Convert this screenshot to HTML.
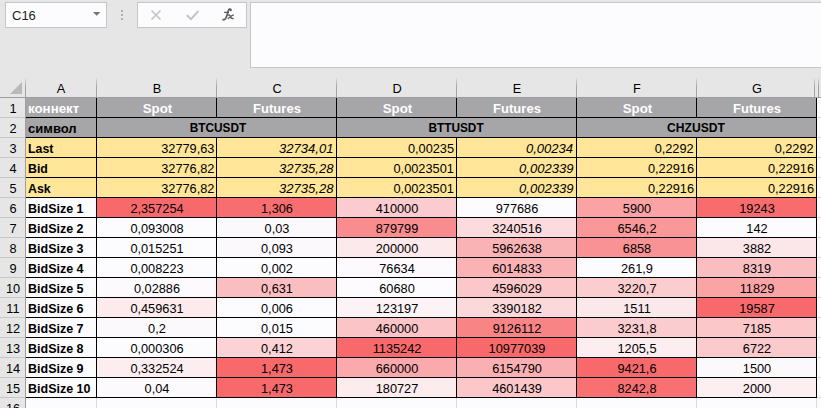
<!DOCTYPE html><html><head><meta charset="utf-8"><style>
*{margin:0;padding:0;box-sizing:border-box}
html,body{width:821px;height:408px;overflow:hidden;background:#e6e6e6;font-family:"Liberation Sans",sans-serif}
.a{position:absolute}
.t{position:absolute;white-space:nowrap;font-size:13.3px;line-height:19px;color:#000}
.b{font-weight:bold}
.i{font-style:italic}
</style></head><body><div class="a" style="left:26px;top:98px;width:795px;height:310px;background:#fcfcfe"></div>
<div class="a" style="left:26px;top:98px;width:791px;height:19px;background:#a6a5a8"></div>
<div class="a" style="left:26px;top:117px;width:791px;height:20px;background:#a6a5a8"></div>
<div class="a" style="left:26px;top:137px;width:791px;height:20px;background:#ffe699"></div>
<div class="a" style="left:26px;top:157px;width:791px;height:20px;background:#ffe699"></div>
<div class="a" style="left:26px;top:177px;width:791px;height:20px;background:#ffe699"></div>
<div class="a" style="left:97px;top:197px;width:120px;height:20px;background:#f8696b"></div>
<div class="a" style="left:97px;top:217px;width:120px;height:20px;background:#fcfbfe"></div>
<div class="a" style="left:97px;top:237px;width:120px;height:20px;background:#fcfbfe"></div>
<div class="a" style="left:97px;top:257px;width:120px;height:20px;background:#fcfcff"></div>
<div class="a" style="left:97px;top:277px;width:120px;height:20px;background:#fcfafd"></div>
<div class="a" style="left:97px;top:297px;width:120px;height:20px;background:#fceaed"></div>
<div class="a" style="left:97px;top:317px;width:120px;height:20px;background:#fcf9fc"></div>
<div class="a" style="left:97px;top:337px;width:120px;height:20px;background:#fcfcff"></div>
<div class="a" style="left:97px;top:357px;width:120px;height:20px;background:#fcedf0"></div>
<div class="a" style="left:97px;top:377px;width:120px;height:20px;background:#fcfafd"></div>
<div class="a" style="left:217px;top:197px;width:120px;height:20px;background:#f86d6f"></div>
<div class="a" style="left:217px;top:217px;width:120px;height:20px;background:#fcf9fc"></div>
<div class="a" style="left:217px;top:237px;width:120px;height:20px;background:#fcf9fc"></div>
<div class="a" style="left:217px;top:257px;width:120px;height:20px;background:#fcfcff"></div>
<div class="a" style="left:217px;top:277px;width:120px;height:20px;background:#fabdc0"></div>
<div class="a" style="left:217px;top:297px;width:120px;height:20px;background:#fcfcff"></div>
<div class="a" style="left:217px;top:317px;width:120px;height:20px;background:#fcfbfe"></div>
<div class="a" style="left:217px;top:337px;width:120px;height:20px;background:#fbd3d6"></div>
<div class="a" style="left:217px;top:357px;width:120px;height:20px;background:#f8696b"></div>
<div class="a" style="left:217px;top:377px;width:120px;height:20px;background:#f8696b"></div>
<div class="a" style="left:337px;top:197px;width:120px;height:20px;background:#fbcccf"></div>
<div class="a" style="left:337px;top:217px;width:120px;height:20px;background:#f98c8e"></div>
<div class="a" style="left:337px;top:237px;width:120px;height:20px;background:#fbe9ec"></div>
<div class="a" style="left:337px;top:257px;width:120px;height:20px;background:#fcfafd"></div>
<div class="a" style="left:337px;top:277px;width:120px;height:20px;background:#fcfcff"></div>
<div class="a" style="left:337px;top:297px;width:120px;height:20px;background:#fcf3f6"></div>
<div class="a" style="left:337px;top:317px;width:120px;height:20px;background:#fbc5c8"></div>
<div class="a" style="left:337px;top:337px;width:120px;height:20px;background:#f8696b"></div>
<div class="a" style="left:337px;top:357px;width:120px;height:20px;background:#faaaac"></div>
<div class="a" style="left:337px;top:377px;width:120px;height:20px;background:#fcecee"></div>
<div class="a" style="left:457px;top:197px;width:120px;height:20px;background:#fcfcff"></div>
<div class="a" style="left:457px;top:217px;width:120px;height:20px;background:#fbdbde"></div>
<div class="a" style="left:457px;top:237px;width:120px;height:20px;background:#fab3b5"></div>
<div class="a" style="left:457px;top:257px;width:120px;height:20px;background:#fab2b4"></div>
<div class="a" style="left:457px;top:277px;width:120px;height:20px;background:#fbc7c9"></div>
<div class="a" style="left:457px;top:297px;width:120px;height:20px;background:#fbd9db"></div>
<div class="a" style="left:457px;top:317px;width:120px;height:20px;background:#f98486"></div>
<div class="a" style="left:457px;top:337px;width:120px;height:20px;background:#f8696b"></div>
<div class="a" style="left:457px;top:357px;width:120px;height:20px;background:#fab0b2"></div>
<div class="a" style="left:457px;top:377px;width:120px;height:20px;background:#fbc7c9"></div>
<div class="a" style="left:577px;top:197px;width:120px;height:20px;background:#faa2a4"></div>
<div class="a" style="left:577px;top:217px;width:120px;height:20px;background:#f99799"></div>
<div class="a" style="left:577px;top:237px;width:120px;height:20px;background:#f99294"></div>
<div class="a" style="left:577px;top:257px;width:120px;height:20px;background:#fcfcff"></div>
<div class="a" style="left:577px;top:277px;width:120px;height:20px;background:#fbcdcf"></div>
<div class="a" style="left:577px;top:297px;width:120px;height:20px;background:#fbe8eb"></div>
<div class="a" style="left:577px;top:317px;width:120px;height:20px;background:#fbcccf"></div>
<div class="a" style="left:577px;top:337px;width:120px;height:20px;background:#fcedf0"></div>
<div class="a" style="left:577px;top:357px;width:120px;height:20px;background:#f8696b"></div>
<div class="a" style="left:577px;top:377px;width:120px;height:20px;background:#f87072"></div>
<div class="a" style="left:697px;top:197px;width:120px;height:20px;background:#f86c6e"></div>
<div class="a" style="left:697px;top:217px;width:120px;height:20px;background:#fcfcff"></div>
<div class="a" style="left:697px;top:237px;width:120px;height:20px;background:#fbe7ea"></div>
<div class="a" style="left:697px;top:257px;width:120px;height:20px;background:#fabec1"></div>
<div class="a" style="left:697px;top:277px;width:120px;height:20px;background:#faa4a6"></div>
<div class="a" style="left:697px;top:297px;width:120px;height:20px;background:#f8696b"></div>
<div class="a" style="left:697px;top:317px;width:120px;height:20px;background:#fbc7c9"></div>
<div class="a" style="left:697px;top:337px;width:120px;height:20px;background:#fbcacd"></div>
<div class="a" style="left:697px;top:357px;width:120px;height:20px;background:#fcf9fc"></div>
<div class="a" style="left:697px;top:377px;width:120px;height:20px;background:#fceef1"></div>
<div class="a" style="left:817px;top:117px;width:4px;height:1px;background:#dadada"></div>
<div class="a" style="left:817px;top:137px;width:4px;height:1px;background:#dadada"></div>
<div class="a" style="left:817px;top:157px;width:4px;height:1px;background:#dadada"></div>
<div class="a" style="left:817px;top:177px;width:4px;height:1px;background:#dadada"></div>
<div class="a" style="left:817px;top:197px;width:4px;height:1px;background:#dadada"></div>
<div class="a" style="left:817px;top:217px;width:4px;height:1px;background:#dadada"></div>
<div class="a" style="left:817px;top:237px;width:4px;height:1px;background:#dadada"></div>
<div class="a" style="left:817px;top:257px;width:4px;height:1px;background:#dadada"></div>
<div class="a" style="left:817px;top:277px;width:4px;height:1px;background:#dadada"></div>
<div class="a" style="left:817px;top:297px;width:4px;height:1px;background:#dadada"></div>
<div class="a" style="left:817px;top:317px;width:4px;height:1px;background:#dadada"></div>
<div class="a" style="left:817px;top:337px;width:4px;height:1px;background:#dadada"></div>
<div class="a" style="left:817px;top:357px;width:4px;height:1px;background:#dadada"></div>
<div class="a" style="left:817px;top:377px;width:4px;height:1px;background:#dadada"></div>
<div class="a" style="left:817px;top:397px;width:4px;height:1px;background:#dadada"></div>
<div class="a" style="left:96px;top:398px;width:1px;height:10px;background:#dadada"></div>
<div class="a" style="left:216px;top:398px;width:1px;height:10px;background:#dadada"></div>
<div class="a" style="left:336px;top:398px;width:1px;height:10px;background:#dadada"></div>
<div class="a" style="left:456px;top:398px;width:1px;height:10px;background:#dadada"></div>
<div class="a" style="left:576px;top:398px;width:1px;height:10px;background:#dadada"></div>
<div class="a" style="left:696px;top:398px;width:1px;height:10px;background:#dadada"></div>
<div class="a" style="left:816px;top:398px;width:1px;height:10px;background:#dadada"></div>
<div class="a" style="left:26px;top:117px;width:791px;height:1px;background:#000"></div>
<div class="a" style="left:26px;top:137px;width:791px;height:1px;background:#000"></div>
<div class="a" style="left:26px;top:157px;width:791px;height:1px;background:#000"></div>
<div class="a" style="left:26px;top:177px;width:791px;height:1px;background:#000"></div>
<div class="a" style="left:26px;top:197px;width:791px;height:1px;background:#000"></div>
<div class="a" style="left:26px;top:217px;width:791px;height:1px;background:#000"></div>
<div class="a" style="left:26px;top:237px;width:791px;height:1px;background:#000"></div>
<div class="a" style="left:26px;top:257px;width:791px;height:1px;background:#000"></div>
<div class="a" style="left:26px;top:277px;width:791px;height:1px;background:#000"></div>
<div class="a" style="left:26px;top:297px;width:791px;height:1px;background:#000"></div>
<div class="a" style="left:26px;top:317px;width:791px;height:1px;background:#000"></div>
<div class="a" style="left:26px;top:337px;width:791px;height:1px;background:#000"></div>
<div class="a" style="left:26px;top:357px;width:791px;height:1px;background:#000"></div>
<div class="a" style="left:26px;top:377px;width:791px;height:1px;background:#000"></div>
<div class="a" style="left:26px;top:397px;width:791px;height:1px;background:#000"></div>
<div class="a" style="left:96px;top:98px;width:1px;height:300px;background:#000"></div>
<div class="a" style="left:216px;top:98px;width:1px;height:300px;background:#000"></div>
<div class="a" style="left:336px;top:98px;width:1px;height:300px;background:#000"></div>
<div class="a" style="left:456px;top:98px;width:1px;height:300px;background:#000"></div>
<div class="a" style="left:576px;top:98px;width:1px;height:300px;background:#000"></div>
<div class="a" style="left:696px;top:98px;width:1px;height:300px;background:#000"></div>
<div class="a" style="left:816px;top:98px;width:1px;height:300px;background:#000"></div>
<div class="a" style="left:216px;top:118px;width:1px;height:19px;background:#a6a5a8"></div>
<div class="a" style="left:456px;top:118px;width:1px;height:19px;background:#a6a5a8"></div>
<div class="a" style="left:696px;top:118px;width:1px;height:19px;background:#a6a5a8"></div>
<div class="a" style="left:0;top:97px;width:25px;height:311px;background:#e6e6e6"></div>
<div class="a" style="left:25px;top:78px;width:1px;height:19px;background:linear-gradient(#dcdcdc,#a8a8a8 40%,#a0a0a0)"></div>
<div class="a" style="left:25px;top:97px;width:1px;height:311px;background:#9e9e9e"></div>
<div class="a" style="left:0;top:97px;width:821px;height:1px;background:#9e9e9e"></div>
<div class="a" style="left:0;top:117px;width:25px;height:1px;background:#c6c6c6"></div>
<div class="a" style="left:0;top:137px;width:25px;height:1px;background:#c6c6c6"></div>
<div class="a" style="left:0;top:157px;width:25px;height:1px;background:#c6c6c6"></div>
<div class="a" style="left:0;top:177px;width:25px;height:1px;background:#c6c6c6"></div>
<div class="a" style="left:0;top:197px;width:25px;height:1px;background:#c6c6c6"></div>
<div class="a" style="left:0;top:217px;width:25px;height:1px;background:#c6c6c6"></div>
<div class="a" style="left:0;top:237px;width:25px;height:1px;background:#c6c6c6"></div>
<div class="a" style="left:0;top:257px;width:25px;height:1px;background:#c6c6c6"></div>
<div class="a" style="left:0;top:277px;width:25px;height:1px;background:#c6c6c6"></div>
<div class="a" style="left:0;top:297px;width:25px;height:1px;background:#c6c6c6"></div>
<div class="a" style="left:0;top:317px;width:25px;height:1px;background:#c6c6c6"></div>
<div class="a" style="left:0;top:337px;width:25px;height:1px;background:#c6c6c6"></div>
<div class="a" style="left:0;top:357px;width:25px;height:1px;background:#c6c6c6"></div>
<div class="a" style="left:0;top:377px;width:25px;height:1px;background:#c6c6c6"></div>
<div class="a" style="left:0;top:397px;width:25px;height:1px;background:#c6c6c6"></div>
<div class="t" style="left:12.5px;top:99px;transform:translateX(-50%) scaleX(0.96)">1</div>
<div class="t" style="left:12.5px;top:119px;transform:translateX(-50%) scaleX(0.96)">2</div>
<div class="t" style="left:12.5px;top:139px;transform:translateX(-50%) scaleX(0.96)">3</div>
<div class="t" style="left:12.5px;top:159px;transform:translateX(-50%) scaleX(0.96)">4</div>
<div class="t" style="left:12.5px;top:179px;transform:translateX(-50%) scaleX(0.96)">5</div>
<div class="t" style="left:12.5px;top:199px;transform:translateX(-50%) scaleX(0.96)">6</div>
<div class="t" style="left:12.5px;top:219px;transform:translateX(-50%) scaleX(0.96)">7</div>
<div class="t" style="left:12.5px;top:239px;transform:translateX(-50%) scaleX(0.96)">8</div>
<div class="t" style="left:12.5px;top:259px;transform:translateX(-50%) scaleX(0.96)">9</div>
<div class="t" style="left:12.5px;top:279px;transform:translateX(-50%) scaleX(0.96)">10</div>
<div class="t" style="left:12.5px;top:299px;transform:translateX(-50%) scaleX(0.96)">11</div>
<div class="t" style="left:12.5px;top:319px;transform:translateX(-50%) scaleX(0.96)">12</div>
<div class="t" style="left:12.5px;top:339px;transform:translateX(-50%) scaleX(0.96)">13</div>
<div class="t" style="left:12.5px;top:359px;transform:translateX(-50%) scaleX(0.96)">14</div>
<div class="t" style="left:12.5px;top:379px;transform:translateX(-50%) scaleX(0.96)">15</div>
<div class="t" style="left:12.5px;top:399px;transform:translateX(-50%) scaleX(0.96)">16</div>
<div class="t" style="left:61.0px;top:79px;transform:translateX(-50%) scaleX(0.96)">A</div>
<div class="t" style="left:156.5px;top:79px;transform:translateX(-50%) scaleX(0.96)">B</div>
<div class="t" style="left:276.5px;top:79px;transform:translateX(-50%) scaleX(0.96)">C</div>
<div class="t" style="left:396.5px;top:79px;transform:translateX(-50%) scaleX(0.96)">D</div>
<div class="t" style="left:516.5px;top:79px;transform:translateX(-50%) scaleX(0.96)">E</div>
<div class="t" style="left:636.5px;top:79px;transform:translateX(-50%) scaleX(0.96)">F</div>
<div class="t" style="left:756.5px;top:79px;transform:translateX(-50%) scaleX(0.96)">G</div>
<div class="a" style="left:96px;top:78px;width:1px;height:19px;background:linear-gradient(#dcdcdc,#a8a8a8 40%,#a0a0a0)"></div>
<div class="a" style="left:216px;top:78px;width:1px;height:19px;background:linear-gradient(#dcdcdc,#a8a8a8 40%,#a0a0a0)"></div>
<div class="a" style="left:336px;top:78px;width:1px;height:19px;background:linear-gradient(#dcdcdc,#a8a8a8 40%,#a0a0a0)"></div>
<div class="a" style="left:456px;top:78px;width:1px;height:19px;background:linear-gradient(#dcdcdc,#a8a8a8 40%,#a0a0a0)"></div>
<div class="a" style="left:576px;top:78px;width:1px;height:19px;background:linear-gradient(#dcdcdc,#a8a8a8 40%,#a0a0a0)"></div>
<div class="a" style="left:696px;top:78px;width:1px;height:19px;background:linear-gradient(#dcdcdc,#a8a8a8 40%,#a0a0a0)"></div>
<div class="a" style="left:814px;top:78px;width:1px;height:19px;background:linear-gradient(#dcdcdc,#a8a8a8 40%,#a0a0a0)"></div>
<div class="a" style="left:818px;top:78px;width:1px;height:19px;background:linear-gradient(#dcdcdc,#a8a8a8 40%,#a0a0a0)"></div>
<svg class="a" style="left:0;top:77px" width="25" height="20"><polygon points="22,82 22,94 10,94" transform="translate(0,-77)" fill="#b9b9b9"/></svg>
<div class="t b" style="left:28px;top:99px;color:#fff;transform:scaleX(1.0);transform-origin:0 0">коннект</div>
<div class="t b" style="left:28px;top:119px;color:#000;transform:scaleX(0.98);transform-origin:0 0">символ</div>
<div class="t b" style="left:28px;top:139px;color:#000;transform:scaleX(0.93);transform-origin:0 0">Last</div>
<div class="t b" style="left:28px;top:159px;color:#000;transform:scaleX(0.93);transform-origin:0 0">Bid</div>
<div class="t b" style="left:28px;top:179px;color:#000;transform:scaleX(0.93);transform-origin:0 0">Ask</div>
<div class="t b" style="left:28px;top:199px;color:#000;transform:scaleX(0.94);transform-origin:0 0">BidSize 1</div>
<div class="t b" style="left:28px;top:219px;color:#000;transform:scaleX(0.94);transform-origin:0 0">BidSize 2</div>
<div class="t b" style="left:28px;top:239px;color:#000;transform:scaleX(0.94);transform-origin:0 0">BidSize 3</div>
<div class="t b" style="left:28px;top:259px;color:#000;transform:scaleX(0.94);transform-origin:0 0">BidSize 4</div>
<div class="t b" style="left:28px;top:279px;color:#000;transform:scaleX(0.94);transform-origin:0 0">BidSize 5</div>
<div class="t b" style="left:28px;top:299px;color:#000;transform:scaleX(0.94);transform-origin:0 0">BidSize 6</div>
<div class="t b" style="left:28px;top:319px;color:#000;transform:scaleX(0.94);transform-origin:0 0">BidSize 7</div>
<div class="t b" style="left:28px;top:339px;color:#000;transform:scaleX(0.94);transform-origin:0 0">BidSize 8</div>
<div class="t b" style="left:28px;top:359px;color:#000;transform:scaleX(0.94);transform-origin:0 0">BidSize 9</div>
<div class="t b" style="left:28px;top:379px;color:#000;transform:scaleX(0.94);transform-origin:0 0">BidSize 10</div>
<div class="t b" style="left:157.5px;top:99px;color:#fff;transform:translateX(-50%) scaleX(1.0)">Spot</div>
<div class="t b" style="left:276.5px;top:99px;color:#fff;transform:translateX(-50%) scaleX(0.98)">Futures</div>
<div class="t b" style="left:397.5px;top:99px;color:#fff;transform:translateX(-50%) scaleX(1.0)">Spot</div>
<div class="t b" style="left:516.5px;top:99px;color:#fff;transform:translateX(-50%) scaleX(0.98)">Futures</div>
<div class="t b" style="left:637.5px;top:99px;color:#fff;transform:translateX(-50%) scaleX(1.0)">Spot</div>
<div class="t b" style="left:756.5px;top:99px;color:#fff;transform:translateX(-50%) scaleX(0.98)">Futures</div>
<div class="t b" style="left:217.5px;top:118px;color:#000;transform:translateX(-50%) scaleX(0.89)">BTCUSDT</div>
<div class="t b" style="left:455.5px;top:118px;color:#000;transform:translateX(-50%) scaleX(0.89)">BTTUSDT</div>
<div class="t b" style="left:695.5px;top:118px;color:#000;transform:translateX(-50%) scaleX(0.91)">CHZUSDT</div>
<div class="t " style="right:607px;top:139px;color:#000;transform:scaleX(0.96);transform-origin:100% 0">32779,63</div>
<div class="t " style="right:607px;top:159px;color:#000;transform:scaleX(0.96);transform-origin:100% 0">32776,82</div>
<div class="t " style="right:607px;top:179px;color:#000;transform:scaleX(0.96);transform-origin:100% 0">32776,82</div>
<div class="t " style="left:156.5px;top:199px;color:#000;transform:translateX(-50%) scaleX(0.96)">2,357254</div>
<div class="t " style="left:156.5px;top:219px;color:#000;transform:translateX(-50%) scaleX(0.96)">0,093008</div>
<div class="t " style="left:156.5px;top:239px;color:#000;transform:translateX(-50%) scaleX(0.96)">0,015251</div>
<div class="t " style="left:156.5px;top:259px;color:#000;transform:translateX(-50%) scaleX(0.96)">0,008223</div>
<div class="t " style="left:156.5px;top:279px;color:#000;transform:translateX(-50%) scaleX(0.96)">0,02886</div>
<div class="t " style="left:156.5px;top:299px;color:#000;transform:translateX(-50%) scaleX(0.96)">0,459631</div>
<div class="t " style="left:156.5px;top:319px;color:#000;transform:translateX(-50%) scaleX(0.96)">0,2</div>
<div class="t " style="left:156.5px;top:339px;color:#000;transform:translateX(-50%) scaleX(0.96)">0,000306</div>
<div class="t " style="left:156.5px;top:359px;color:#000;transform:translateX(-50%) scaleX(0.96)">0,332524</div>
<div class="t " style="left:156.5px;top:379px;color:#000;transform:translateX(-50%) scaleX(0.96)">0,04</div>
<div class="t i" style="right:488px;top:139px;color:#000;transform:scaleX(0.98);transform-origin:100% 0">32734,01</div>
<div class="t i" style="right:488px;top:159px;color:#000;transform:scaleX(0.98);transform-origin:100% 0">32735,28</div>
<div class="t i" style="right:488px;top:179px;color:#000;transform:scaleX(0.98);transform-origin:100% 0">32735,28</div>
<div class="t " style="left:276.5px;top:199px;color:#000;transform:translateX(-50%) scaleX(0.96)">1,306</div>
<div class="t " style="left:276.5px;top:219px;color:#000;transform:translateX(-50%) scaleX(0.96)">0,03</div>
<div class="t " style="left:276.5px;top:239px;color:#000;transform:translateX(-50%) scaleX(0.96)">0,093</div>
<div class="t " style="left:276.5px;top:259px;color:#000;transform:translateX(-50%) scaleX(0.96)">0,002</div>
<div class="t " style="left:276.5px;top:279px;color:#000;transform:translateX(-50%) scaleX(0.96)">0,631</div>
<div class="t " style="left:276.5px;top:299px;color:#000;transform:translateX(-50%) scaleX(0.96)">0,006</div>
<div class="t " style="left:276.5px;top:319px;color:#000;transform:translateX(-50%) scaleX(0.96)">0,015</div>
<div class="t " style="left:276.5px;top:339px;color:#000;transform:translateX(-50%) scaleX(0.96)">0,412</div>
<div class="t " style="left:276.5px;top:359px;color:#000;transform:translateX(-50%) scaleX(0.96)">1,473</div>
<div class="t " style="left:276.5px;top:379px;color:#000;transform:translateX(-50%) scaleX(0.96)">1,473</div>
<div class="t " style="right:367px;top:139px;color:#000;transform:scaleX(0.96);transform-origin:100% 0">0,00235</div>
<div class="t " style="right:367px;top:159px;color:#000;transform:scaleX(0.96);transform-origin:100% 0">0,0023501</div>
<div class="t " style="right:367px;top:179px;color:#000;transform:scaleX(0.96);transform-origin:100% 0">0,0023501</div>
<div class="t " style="left:396.5px;top:199px;color:#000;transform:translateX(-50%) scaleX(0.96)">410000</div>
<div class="t " style="left:396.5px;top:219px;color:#000;transform:translateX(-50%) scaleX(0.96)">879799</div>
<div class="t " style="left:396.5px;top:239px;color:#000;transform:translateX(-50%) scaleX(0.96)">200000</div>
<div class="t " style="left:396.5px;top:259px;color:#000;transform:translateX(-50%) scaleX(0.96)">76634</div>
<div class="t " style="left:396.5px;top:279px;color:#000;transform:translateX(-50%) scaleX(0.96)">60680</div>
<div class="t " style="left:396.5px;top:299px;color:#000;transform:translateX(-50%) scaleX(0.96)">123197</div>
<div class="t " style="left:396.5px;top:319px;color:#000;transform:translateX(-50%) scaleX(0.96)">460000</div>
<div class="t " style="left:396.5px;top:339px;color:#000;transform:translateX(-50%) scaleX(0.96)">1135242</div>
<div class="t " style="left:396.5px;top:359px;color:#000;transform:translateX(-50%) scaleX(0.96)">660000</div>
<div class="t " style="left:396.5px;top:379px;color:#000;transform:translateX(-50%) scaleX(0.96)">180727</div>
<div class="t i" style="right:248px;top:139px;color:#000;transform:scaleX(0.98);transform-origin:100% 0">0,00234</div>
<div class="t i" style="right:248px;top:159px;color:#000;transform:scaleX(0.98);transform-origin:100% 0">0,002339</div>
<div class="t i" style="right:248px;top:179px;color:#000;transform:scaleX(0.98);transform-origin:100% 0">0,002339</div>
<div class="t " style="left:516.5px;top:199px;color:#000;transform:translateX(-50%) scaleX(0.96)">977686</div>
<div class="t " style="left:516.5px;top:219px;color:#000;transform:translateX(-50%) scaleX(0.96)">3240516</div>
<div class="t " style="left:516.5px;top:239px;color:#000;transform:translateX(-50%) scaleX(0.96)">5962638</div>
<div class="t " style="left:516.5px;top:259px;color:#000;transform:translateX(-50%) scaleX(0.96)">6014833</div>
<div class="t " style="left:516.5px;top:279px;color:#000;transform:translateX(-50%) scaleX(0.96)">4596029</div>
<div class="t " style="left:516.5px;top:299px;color:#000;transform:translateX(-50%) scaleX(0.96)">3390182</div>
<div class="t " style="left:516.5px;top:319px;color:#000;transform:translateX(-50%) scaleX(0.96)">9126112</div>
<div class="t " style="left:516.5px;top:339px;color:#000;transform:translateX(-50%) scaleX(0.96)">10977039</div>
<div class="t " style="left:516.5px;top:359px;color:#000;transform:translateX(-50%) scaleX(0.96)">6154790</div>
<div class="t " style="left:516.5px;top:379px;color:#000;transform:translateX(-50%) scaleX(0.96)">4601439</div>
<div class="t " style="right:127px;top:139px;color:#000;transform:scaleX(0.96);transform-origin:100% 0">0,2292</div>
<div class="t " style="right:127px;top:159px;color:#000;transform:scaleX(0.96);transform-origin:100% 0">0,22916</div>
<div class="t " style="right:127px;top:179px;color:#000;transform:scaleX(0.96);transform-origin:100% 0">0,22916</div>
<div class="t " style="left:636.5px;top:199px;color:#000;transform:translateX(-50%) scaleX(0.96)">5900</div>
<div class="t " style="left:636.5px;top:219px;color:#000;transform:translateX(-50%) scaleX(0.96)">6546,2</div>
<div class="t " style="left:636.5px;top:239px;color:#000;transform:translateX(-50%) scaleX(0.96)">6858</div>
<div class="t " style="left:636.5px;top:259px;color:#000;transform:translateX(-50%) scaleX(0.96)">261,9</div>
<div class="t " style="left:636.5px;top:279px;color:#000;transform:translateX(-50%) scaleX(0.96)">3220,7</div>
<div class="t " style="left:636.5px;top:299px;color:#000;transform:translateX(-50%) scaleX(0.96)">1511</div>
<div class="t " style="left:636.5px;top:319px;color:#000;transform:translateX(-50%) scaleX(0.96)">3231,8</div>
<div class="t " style="left:636.5px;top:339px;color:#000;transform:translateX(-50%) scaleX(0.96)">1205,5</div>
<div class="t " style="left:636.5px;top:359px;color:#000;transform:translateX(-50%) scaleX(0.96)">9421,6</div>
<div class="t " style="left:636.5px;top:379px;color:#000;transform:translateX(-50%) scaleX(0.96)">8242,8</div>
<div class="t " style="right:7px;top:139px;color:#000;transform:scaleX(0.96);transform-origin:100% 0">0,2292</div>
<div class="t " style="right:7px;top:159px;color:#000;transform:scaleX(0.96);transform-origin:100% 0">0,22916</div>
<div class="t " style="right:7px;top:179px;color:#000;transform:scaleX(0.96);transform-origin:100% 0">0,22916</div>
<div class="t " style="left:756.5px;top:199px;color:#000;transform:translateX(-50%) scaleX(0.96)">19243</div>
<div class="t " style="left:756.5px;top:219px;color:#000;transform:translateX(-50%) scaleX(0.96)">142</div>
<div class="t " style="left:756.5px;top:239px;color:#000;transform:translateX(-50%) scaleX(0.96)">3882</div>
<div class="t " style="left:756.5px;top:259px;color:#000;transform:translateX(-50%) scaleX(0.96)">8319</div>
<div class="t " style="left:756.5px;top:279px;color:#000;transform:translateX(-50%) scaleX(0.96)">11829</div>
<div class="t " style="left:756.5px;top:299px;color:#000;transform:translateX(-50%) scaleX(0.96)">19587</div>
<div class="t " style="left:756.5px;top:319px;color:#000;transform:translateX(-50%) scaleX(0.96)">7185</div>
<div class="t " style="left:756.5px;top:339px;color:#000;transform:translateX(-50%) scaleX(0.96)">6722</div>
<div class="t " style="left:756.5px;top:359px;color:#000;transform:translateX(-50%) scaleX(0.96)">1500</div>
<div class="t " style="left:756.5px;top:379px;color:#000;transform:translateX(-50%) scaleX(0.96)">2000</div>
<div class="a" style="left:5px;top:2px;width:102px;height:26px;border:1px solid #c6c6c6;background:#fcfcfe"></div>
<div class="t" style="left:12px;top:6px;font-size:13px;line-height:20px;color:#222">C16</div>
<svg class="a" style="left:93px;top:12px" width="8" height="5"><polygon points="0,0 7.4,0 3.7,3.8" fill="#737373"/></svg>
<div class="a" style="left:121px;top:10px;width:2px;height:2px;background:#b0b0b0"></div>
<div class="a" style="left:121px;top:14px;width:2px;height:2px;background:#b0b0b0"></div>
<div class="a" style="left:121px;top:18px;width:2px;height:2px;background:#b0b0b0"></div>
<div class="a" style="left:137px;top:2px;width:110px;height:26px;border:1px solid #c6c6c6;background:#fcfcfe"></div>
<svg class="a" style="left:150px;top:9px" width="12" height="12"><path d="M1.5 1.5 L10.5 10.5 M10.5 1.5 L1.5 10.5" stroke="#c4c4c4" stroke-width="1.6"/></svg>
<svg class="a" style="left:185px;top:9px" width="16" height="13"><path d="M1.8 6.3 L6 10.2 L13.4 2" stroke="#c4c4c4" stroke-width="2" fill="none"/></svg>
<svg class="a" style="left:218px;top:6px" width="22" height="18"><g stroke="#5c5c5c" fill="none"><path d="M12.9 4.3 C12.8 3 11.3 2.6 10.6 4 C10 5.3 9.5 7.5 8.9 9.6 C8.3 11.7 7.6 13.1 6.6 13.5 C5.8 13.8 5 13.7 4.4 13.4" stroke-width="1.7"/><path d="M6.1 6.4 H10.9" stroke-width="1.3"/><path d="M10 9.3 C11.4 8.5 12.2 9.5 12.7 10.9 C13.2 12.3 14.2 13 15.6 12.3 M15.8 8.9 C13.8 9.3 11.9 11.2 9.8 12.7" stroke-width="1.4"/></g><circle cx="12.7" cy="4.2" r="1.1" fill="#5c5c5c"/></svg>
<div class="a" style="left:250px;top:2px;width:580px;height:66px;border:1px solid #c6c6c6;background:#fcfcfe"></div></body></html>
